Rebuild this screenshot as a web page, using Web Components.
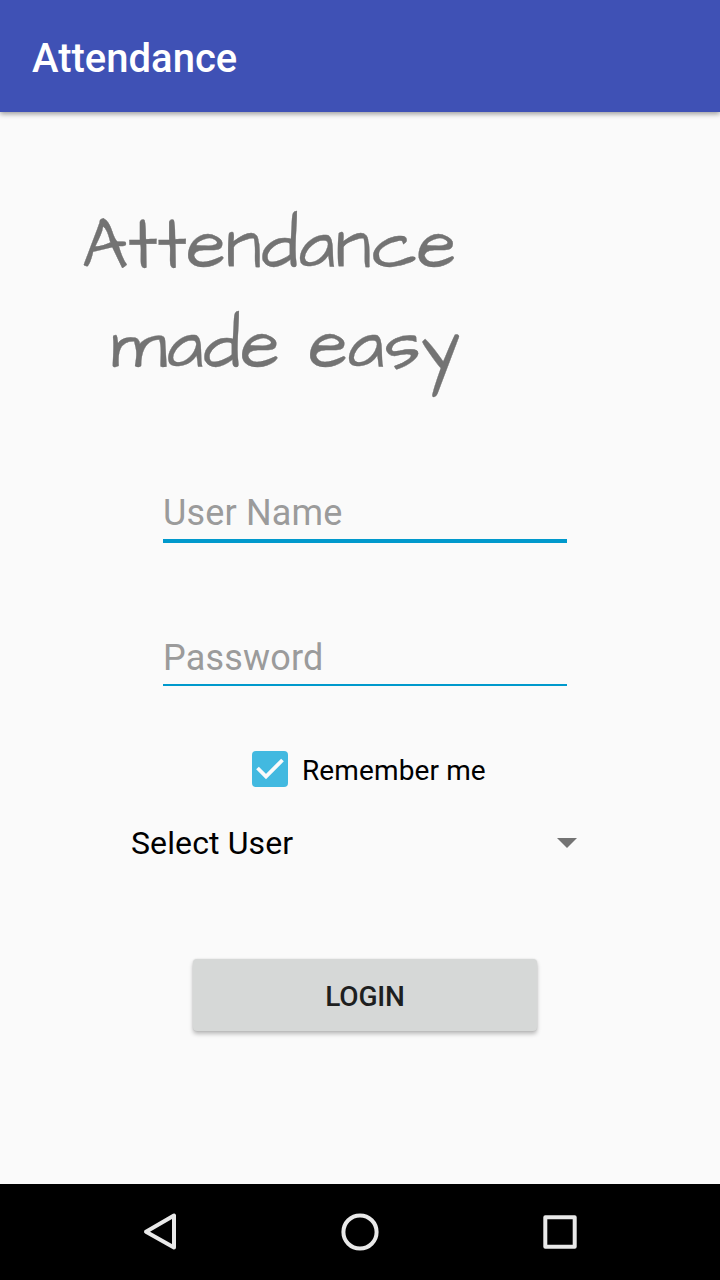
<!DOCTYPE html>
<html lang="en">
<head>
<meta charset="utf-8">
<title>Attendance</title>
<style>
html,body{margin:0;height:100%;background:#fafafa}
body{font-family:Roboto,"Liberation Sans",sans-serif}
</style>
</head>
<body>
<attendance-screen></attendance-screen>
<script>
function define(name, html) {
  const t = document.createElement('template');
  t.innerHTML = html;
  customElements.define(name, class extends HTMLElement {
    constructor() {
      super();
      this.attachShadow({mode: 'open'}).append(t.content.cloneNode(true));
    }
  });
}

define('app-bar', `<style>
:host{display:flex;align-items:center;box-sizing:border-box;height:112px;flex:none;padding:6px 32px 0;background:#3f51b5;color:#fff;font-size:40px;line-height:48px;font-weight:500;box-shadow:0 2px 5px rgba(0,0,0,.38);z-index:1}
</style><slot></slot>`);

define('hero-title', `<style>
:host{display:block;color:#737373;font-family:"Architects Daughter",Lato,sans-serif}
div{font-size:72px;line-height:100px;letter-spacing:.1px;white-space:pre;-webkit-text-stroke:.3px currentColor}
</style><div>Attendance</div><div> made easy</div>`);

define('text-field', `<style>
:host{display:block;box-sizing:border-box;width:404px;height:52px;padding-top:2px;border-bottom:2px solid #0099cc;color:#9b9b9b;font-size:36px;line-height:44px;letter-spacing:.2px}
:host([focused]){height:54px;border-bottom-width:4px;letter-spacing:.15px}
</style><slot></slot>`);

define('check-option', `<style>
:host{display:flex;align-items:center;gap:14px;height:36px;color:#000;font-size:28px;letter-spacing:.12px}
svg{display:block;flex:none}
span{line-height:36px;padding-top:3px}
</style>
<svg width="36" height="36" viewBox="0 0 36 36"><rect width="36" height="36" rx="4" fill="#42b9e0"/><path d="M5.5 17 14 25.5 30.5 9" fill="none" stroke="#fafafa" stroke-width="3.8"/></svg>
<span><slot></slot></span>`);

define('drop-down', `<style>
:host{display:flex;align-items:center;justify-content:space-between;width:446px;height:40px;color:#000;font-size:32px;line-height:40px;letter-spacing:.12px}
svg{display:block}
</style>
<slot></slot><svg width="20" height="10" viewBox="0 0 20 10"><path d="M0 0h20L10 10z" fill="#737373"/></svg>`);

define('raised-button', `<style>
:host{display:flex;align-items:center;justify-content:center;box-sizing:border-box;width:344px;height:72px;padding-top:3px;border-radius:4px;background:#d6d8d7;color:#1e1f1f;font-size:28px;line-height:36px;font-weight:500;letter-spacing:-.2px;box-shadow:0 3px 4px rgba(0,0,0,.25),0 0 2px rgba(0,0,0,.12)}
</style><slot></slot>`);

define('nav-bar', `<style>
:host{display:flex;justify-content:center;align-items:center;gap:160px;height:96px;flex:none;background:#000}
svg{display:block;width:40px;height:40px;fill:none;stroke:#e9e9e9;stroke-width:4;stroke-linejoin:round}
</style>
<svg viewBox="0 0 40 40"><path d="M34 3.5v32L6 19.8z"/></svg>
<svg viewBox="0 0 40 40"><circle cx="20" cy="20" r="16.6"/></svg>
<svg viewBox="0 0 40 40"><rect x="5.3" y="5.3" width="29.4" height="29.4"/></svg>`);

define('attendance-screen', `<style>
:host{display:flex;flex-direction:column;height:1280px;width:720px;background:#fafafa}
main{flex:1;display:flex;flex-direction:column;align-items:flex-start}
hero-title{margin:84px 0 0 82px}
.user{margin:93px 0 0 163px}
.pass{margin:91px 0 0 163px}
check-option{margin:65px 0 0 252px}
drop-down{margin:36px 0 0 131px}
raised-button{margin:96px 0 0 193px}
</style>
<app-bar>Attendance</app-bar>
<main>
<hero-title></hero-title>
<text-field class="user" focused>User Name</text-field>
<text-field class="pass">Password</text-field>
<check-option>Remember me</check-option>
<drop-down>Select User</drop-down>
<raised-button>LOGIN</raised-button>
</main>
<nav-bar></nav-bar>`);
</script>
</body>
</html>
